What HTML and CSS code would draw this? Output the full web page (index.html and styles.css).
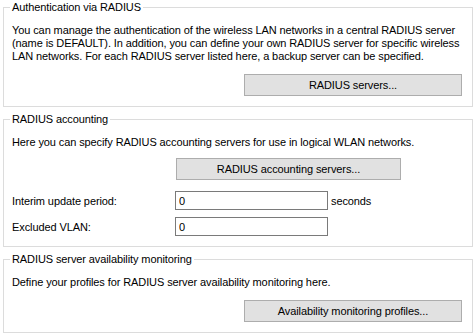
FILE: index.html
```html
<!DOCTYPE html>
<html lang="en">
<head>
    <meta charset="UTF-8">
    <meta name="viewport" content="width=device-width, initial-scale=1.0">
    <title>RADIUS</title>
    <link rel="stylesheet" href="styles.css">
</head>
<body>
<fieldset class="group first">
    <legend>Authentication via RADIUS</legend>
    <p class="info">You can manage the authentication of the wireless LAN networks in a central RADIUS server<br>(name is DEFAULT). In addition, you can define your own RADIUS server for specific wireless<br>LAN networks. For each RADIUS server listed here, a backup server can be specified.</p>
    <div class="actions">
        <button type="button" class="btn wide">RADIUS servers...</button>
    </div>
</fieldset>

<fieldset class="group">
    <legend>RADIUS accounting</legend>
    <p class="info">Here you can specify RADIUS accounting servers for use in logical WLAN networks.</p>
    <div class="form">
        <span></span>
        <button type="button" class="btn mid">RADIUS accounting servers...</button>
        <label for="interim">Interim update period:</label>
        <div class="field"><input type="text" id="interim" value="0"><span>seconds</span></div>
        <label for="vlan">Excluded VLAN:</label>
        <div class="field"><input type="text" id="vlan" value="0"></div>
    </div>
</fieldset>

<fieldset class="group">
    <legend>RADIUS server availability monitoring</legend>
    <p class="info">Define your profiles for RADIUS server availability monitoring here.</p>
    <div class="actions">
        <button type="button" class="btn wide">Availability monitoring profiles...</button>
    </div>
</fieldset>
</body>
</html>
```

FILE: styles.css
```css
body {
    margin: 0;
    background: #fff;
    font-family: "Liberation Sans", Arial, sans-serif;
    font-size: 11px;
    letter-spacing: -0.1px;
    color: #000;
}

.group {
    margin: 5px 3px 0 3px;
    padding: 10px 10px 10px 8px;
    border: 1px solid #dcdcdc;
    min-width: 0;
}

.group.first {
    margin-top: 0;
}

legend {
    padding: 0 2px;
    margin-left: -2px;
    line-height: 14px;
}

.info {
    margin: 0;
    line-height: 13px;
    white-space: nowrap;
}

.actions {
    display: flex;
    justify-content: flex-end;
    margin-top: 11px;
}

.btn {
    height: 22px;
    background: #e1e1e1;
    border: 1px solid #adadad;
    border-radius: 0;
    font-family: inherit;
    font-size: 11px;
    letter-spacing: inherit;
    color: #000;
    padding: 0;
}

.btn.wide {
    width: 218px;
}

.btn.mid {
    width: 225px;
    margin-left: 1px;
}

.form {
    display: grid;
    grid-template-columns: 163px 1fr;
    row-gap: 7px;
    align-items: center;
    margin-top: 9px;
}

.form .btn {
    margin-bottom: 4px;
}

.field {
    display: flex;
    align-items: center;
    gap: 3px;
}

.field input {
    width: 153px;
    height: 19px;
    box-sizing: border-box;
    border: 1px solid #7a7a7a;
    padding: 0 3px;
    font-family: inherit;
    font-size: 11px;
    color: #000;
    outline: none;
}
```
